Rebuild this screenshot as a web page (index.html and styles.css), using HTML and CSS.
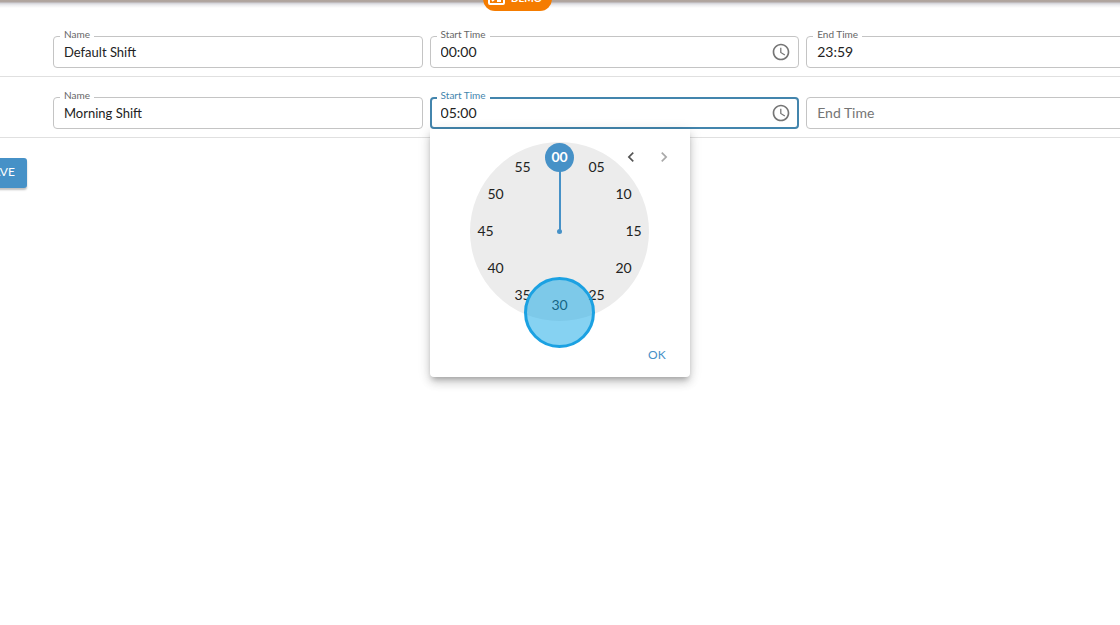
FILE: index.html
```html
<!DOCTYPE html>
<html lang="en">
<head>
<meta charset="utf-8">
<title>Shifts</title>
<link rel="stylesheet" href="styles.css">
</head>
<body>
<header class="topbar">
  <div class="demo">
    <svg class="demo-icon" viewBox="0 0 18 14" aria-hidden="true"><rect x="1" y="1" width="15" height="12" rx="1" /><path d="M4 5l3 2.500-3 2.500M9 10h4" /></svg>
    <span>DEMO</span>
  </div>
</header>
<main class="shifts">
  <section class="row">
    <div class="field">
      <label class="label" for="name1">Name</label>
      <input class="input" id="name1" value="Default Shift">
    </div>
    <div class="field">
      <label class="label" for="start1">Start Time</label>
      <input class="input time" id="start1" value="00:00">
      <button class="clock-button" type="button" aria-label="Choose time"><svg class="clock-icon" viewBox="0 0 24 24"><path d="M11.990 2C6.470 2 2 6.480 2 12s4.470 10 9.990 10C17.520 22 22 17.520 22 12S17.520 2 11.990 2zM12 20c-4.420 0-8-3.580-8-8s3.580-8 8-8 8 3.580 8 8-3.580 8-8 8zm.5-13H11v6l5.250 3.150.75-1.230-4.500-2.670z" /></svg></button>
    </div>
    <div class="field">
      <label class="label" for="end1">End Time</label>
      <input class="input time" id="end1" value="23:59">
    </div>
  </section>
  <section class="row">
    <div class="field">
      <label class="label" for="name2">Name</label>
      <input class="input" id="name2" value="Morning Shift">
    </div>
    <div class="field focused">
      <label class="label" for="start2">Start Time</label>
      <input class="input time" id="start2" value="05:00">
      <button class="clock-button" type="button" aria-label="Choose time"><svg class="clock-icon" viewBox="0 0 24 24"><path d="M11.990 2C6.470 2 2 6.480 2 12s4.470 10 9.990 10C17.520 22 22 17.520 22 12S17.520 2 11.990 2zM12 20c-4.420 0-8-3.580-8-8s3.580-8 8-8 8 3.580 8 8-3.580 8-8 8zm.5-13H11v6l5.250 3.150.75-1.230-4.500-2.670z" /></svg></button>
      <div class="picker">
        <div class="dial">
          <span class="hand"></span>
          <span class="pivot"></span>
          <button class="minute m00" type="button">00</button>
          <button class="minute m05" type="button">05</button>
          <button class="minute m10" type="button">10</button>
          <button class="minute m15" type="button">15</button>
          <button class="minute m20" type="button">20</button>
          <button class="minute m25" type="button">25</button>
          <button class="minute m30" type="button">30</button>
          <button class="minute m35" type="button">35</button>
          <button class="minute m40" type="button">40</button>
          <button class="minute m45" type="button">45</button>
          <button class="minute m50" type="button">50</button>
          <button class="minute m55" type="button">55</button>
          <span class="touch"></span>
        </div>
        <div class="arrows">
          <button class="arrow" type="button" aria-label="Previous"><svg class="arrow-icon" viewBox="0 0 24 24"><path d="M15.410 7.410 14 6l-6 6 6 6 1.410-1.410L10.830 12z" /></svg></button>
          <button class="arrow" type="button" aria-label="Next" disabled><svg class="arrow-icon" viewBox="0 0 24 24"><path d="M10 6 8.590 7.410 13.170 12l-4.580 4.590L10 18l6-6z" /></svg></button>
        </div>
        <div class="actions"><button class="ok" type="button">OK</button></div>
      </div>
    </div>
    <div class="field">
      <input class="input time" id="end2" placeholder="End Time" aria-label="End Time">
    </div>
  </section>
  <button class="save" type="button">SAVE</button>
</main>
</body>
</html>
```
FILE: styles.css
```css
* { box-sizing: border-box; }

body {
  margin: 0;
  min-height: 100vh;
  overflow: hidden;
  background: #fff;
  color: #222;
  font: 13px/20px Lato, "Liberation Sans", sans-serif;
}

button, input { font: inherit; color: inherit; }
button { padding: 0; border: 0; background: none; }

.topbar {
  position: relative;
  height: 15px;
  background: linear-gradient(#b0a49c 0, #b0a6a2 2px, #d0d0d6 3px, #ececee 5px, #fff 8px);
}

.demo {
  position: absolute;
  top: -15px;
  left: 483px;
  display: flex;
  align-items: center;
  gap: 5px;
  height: 26px;
  padding: 0 10px 0 5px;
  border-radius: 12px;
  background: #f57c00;
  color: #fff;
  font-size: 10px;
  font-weight: 900;
}

.demo-icon { width: 18px; height: 14px; fill: none; stroke: #fff; stroke-width: 2; }

.row {
  display: grid;
  grid-template-columns: repeat(3, 33vw);
  gap: 7px;
  padding: 21px 0 8px 53px;
  border-bottom: 1px solid #e0e0e0;
}

.row + .row { padding-top: 20px; }

.field { position: relative; display: flex; }

.label {
  position: absolute;
  top: -8px;
  left: 7px;
  padding: 0 4px;
  background: #fff;
  color: #666;
  font-size: 10px;
  line-height: 13px;
}

.input {
  width: 100%;
  height: 32px;
  padding: 0 10px 1px;
  border: 1px solid #c4c4c4;
  border-radius: 4px;
  background: #fff;
  outline: 0;
}

.time { padding-bottom: 2px; font-size: 14px; }

.input::placeholder { color: #757575; opacity: 1; }

.focused .input { border: 2px solid #4385ad; padding: 0 9px 2px; }
.focused .label { color: #4385ad; }

.clock-button {
  position: absolute;
  top: 6px;
  right: 8px;
  width: 20px;
  height: 20px;
}

.clock-icon { display: block; width: 20px; height: 20px; fill: #757575; }

.picker {
  position: absolute;
  z-index: 1;
  top: 32px;
  left: 0;
  width: 260px;
  padding: 13px 16px 12px;
  border-radius: 0 0 4px 4px;
  background: #fff;
  box-shadow: 0 4px 5px -2px rgba(0, 0, 0, .2), 0 6px 10px rgba(0, 0, 0, .14), 0 2px 14px rgba(0, 0, 0, .12);
}

.dial {
  position: relative;
  width: 179px;
  height: 179px;
  margin: 0 auto;
  border-radius: 50%;
  background: #ececec;
  font-size: 14px;
}

.hand {
  position: absolute;
  top: 15px;
  left: 89px;
  width: 2px;
  height: 74px;
  background: #4691c7;
}

.pivot {
  position: absolute;
  top: 87px;
  left: 87px;
  width: 5px;
  height: 5px;
  border-radius: 50%;
  background: #4691c7;
}

.minute {
  position: absolute;
  width: 29px;
  height: 29px;
  padding-bottom: 2px;
  border-radius: 50%;
  line-height: 27px;
  text-align: center;
}

.m00 { top: 1px; left: 75px; background: #4691c7; color: #fff; font-weight: 700; }
.m05 { top: 11px; left: 112px; }
.m10 { top: 38px; left: 139px; }
.m15 { top: 75px; left: 149px; }
.m20 { top: 112px; left: 139px; }
.m25 { top: 139px; left: 112px; }
.m30 { top: 149px; left: 75px; }
.m35 { top: 139px; left: 38px; }
.m40 { top: 112px; left: 11px; }
.m45 { top: 75px; left: 1px; }
.m50 { top: 38px; left: 11px; }
.m55 { top: 11px; left: 38px; }

.touch {
  position: absolute;
  top: 135px;
  left: 54px;
  width: 71px;
  height: 71px;
  border: 3px solid #1ba1e2;
  border-radius: 50%;
  background: rgba(13, 165, 230, .5);
}

.arrows {
  position: absolute;
  top: 18px;
  right: 16px;
  display: flex;
  gap: 13px;
}

.arrow { width: 20px; height: 20px; }
.arrow:disabled { opacity: .5; }
.arrow-icon { display: block; width: 20px; height: 20px; fill: #555; }

.actions { display: flex; justify-content: flex-end; padding-top: 24px; }

.ok { padding: 0 8px; color: #4691c7; font-size: 12px; }

.save {
  height: 30px;
  margin: 20px 0 0 -26px;
  padding: 0 12px 2px;
  border-radius: 3px;
  background: #4691c7;
  box-shadow: 0 2px 2px rgba(0, 0, 0, .25);
  color: #fff;
  font-size: 12px;
}
```
